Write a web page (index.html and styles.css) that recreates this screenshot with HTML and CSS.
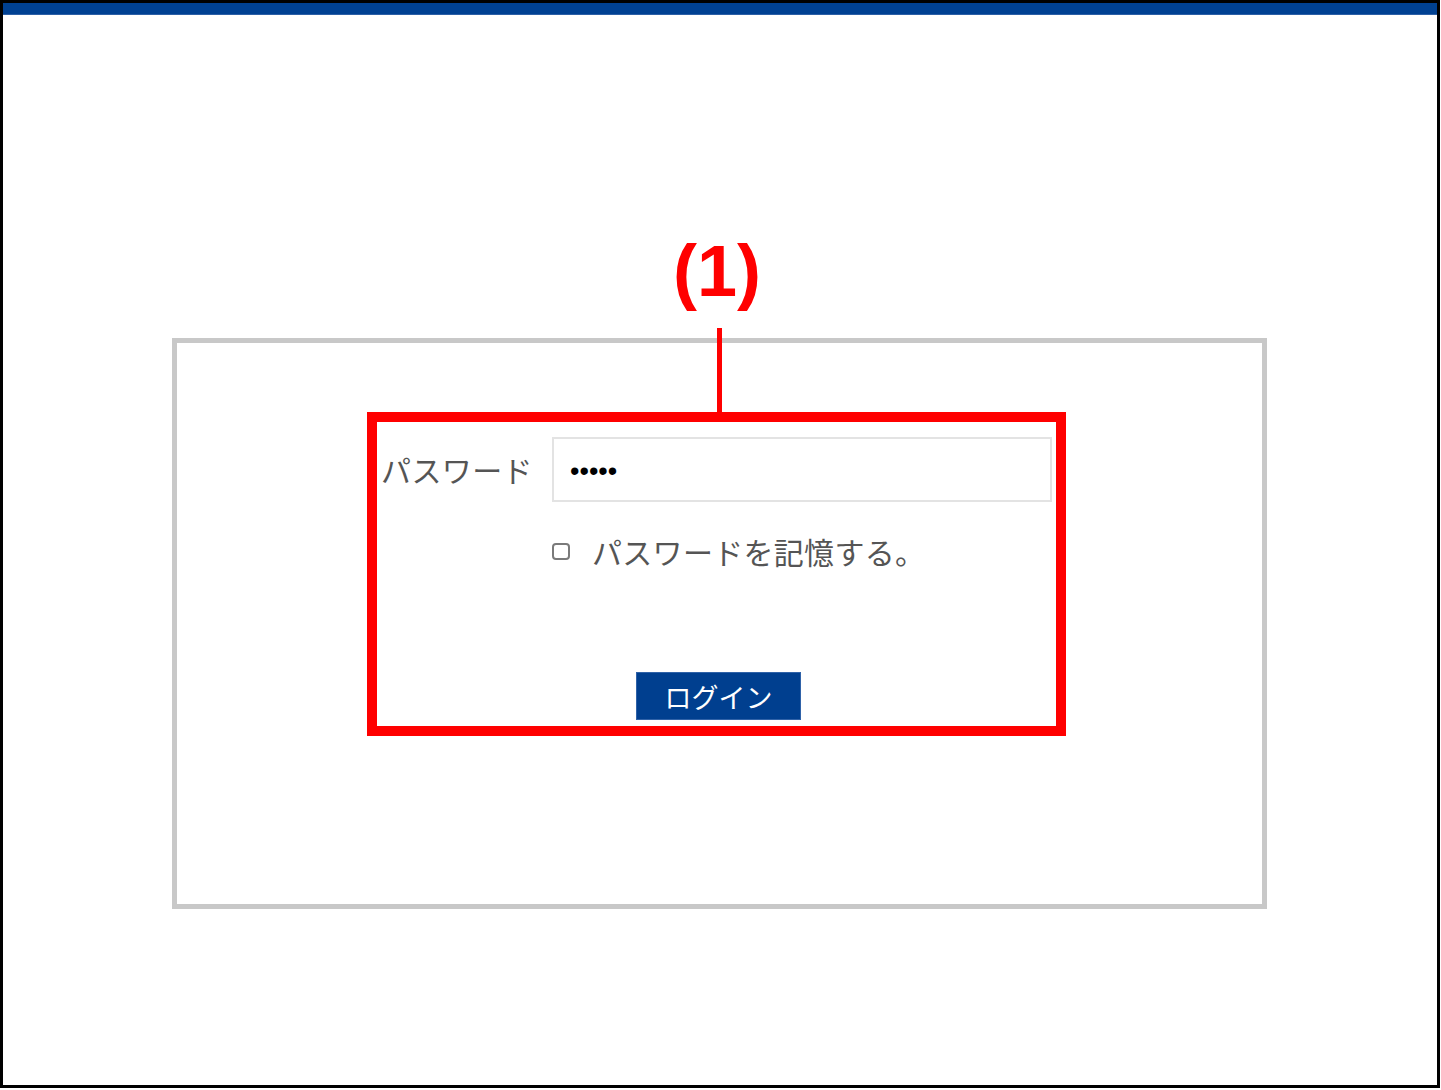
FILE: index.html
```html
<!DOCTYPE html>
<html lang="ja">
<head>
<meta charset="utf-8">
<title>ログイン</title>
<link rel="stylesheet" href="styles.css">
</head>
<body>
<div class="frame">
  <div class="topbar"></div>
  <div class="panel">
    <form class="highlight">
      <div class="field-row">
        <label class="field-label" for="pw">パスワード</label>
        <input class="field-input" id="pw" type="password" value="abcde">
      </div>
      <div class="remember-row">
        <input class="remember-box" type="checkbox" id="remember">
        <label class="remember-label" for="remember">パスワードを記憶する。</label>
      </div>
      <div class="button-row">
        <button class="login-btn" type="button">ログイン</button>
      </div>
    </form>
  </div>
  <div class="callout-label">(1)</div>
  <div class="callout-line"></div>
</div>
</body>
</html>
```

FILE: styles.css
```css
html, body {
  margin: 0;
  padding: 0;
  background: #ffffff;
}

.frame {
  position: relative;
  box-sizing: border-box;
  width: 1440px;
  height: 1088px;
  border: 3px solid #000000;
  background: #ffffff;
  font-family: "Noto Sans CJK JP", "Noto Sans", sans-serif;
}

.topbar {
  height: 12px;
  background: #004192;
  border-bottom: 1px solid #2c5fa6;
  box-sizing: border-box;
}

.panel {
  box-sizing: border-box;
  width: 1095px;
  height: 571px;
  margin: 323px 0 0 169px;
  border: 5px solid #c8c8c8;
  padding-top: 69px;
  padding-left: 190px;
}

.highlight {
  box-sizing: border-box;
  width: 699px;
  height: 324px;
  border: 10px solid #ff0000;
  margin: 0;
  padding: 15px 0 6px 4px;
  display: flex;
  flex-direction: column;
}

.field-row {
  display: flex;
  align-items: center;
  height: 65px;
}

.field-label {
  width: 171px;
  font-size: 30px;
  line-height: 1;
  color: #555555;
  letter-spacing: 0.4px;
  position: relative;
  top: -1px;
}

.field-input {
  box-sizing: border-box;
  width: 500px;
  height: 65px;
  margin: 0;
  border: 2px solid #e3e3e3;
  padding: 4px 0 0 16px;
  font-family: "Liberation Sans", Arial, sans-serif;
  font-size: 27px;
  color: #000000;
  outline: none;
  background: #ffffff;
}

.remember-row {
  display: flex;
  align-items: center;
  height: 36px;
  margin-top: 31px;
  padding-left: 171px;
}

.remember-box {
  appearance: none;
  -webkit-appearance: none;
  box-sizing: border-box;
  width: 18px;
  height: 17px;
  margin: 0 22px 0 0;
  border: 2px solid #7a7a7a;
  border-radius: 4px;
  background: #ffffff;
  position: relative;
  top: 0;
}

.remember-label {
  font-size: 30px;
  line-height: 1;
  color: #555555;
  letter-spacing: 0.3px;
}

.button-row {
  margin-top: 103px;
  padding-left: 255px;
}

.login-btn {
  box-sizing: border-box;
  width: 165px;
  height: 48px;
  margin: 0;
  padding: 0;
  border: 1px solid #2f62a8;
  background: #003f8f;
  color: #ffffff;
  font-family: "Noto Sans CJK JP", "Noto Sans", sans-serif;
  font-size: 27px;
  line-height: 1;
}

.callout-label {
  position: absolute;
  left: 614px;
  top: 232px;
  width: 200px;
  text-align: center;
  font-family: "Liberation Sans", Arial, sans-serif;
  font-weight: bold;
  font-size: 72px;
  line-height: 1;
  color: #ff0000;
}

.callout-line {
  position: absolute;
  left: 714px;
  top: 325px;
  width: 5px;
  height: 88px;
  background: #ff0000;
}
```
